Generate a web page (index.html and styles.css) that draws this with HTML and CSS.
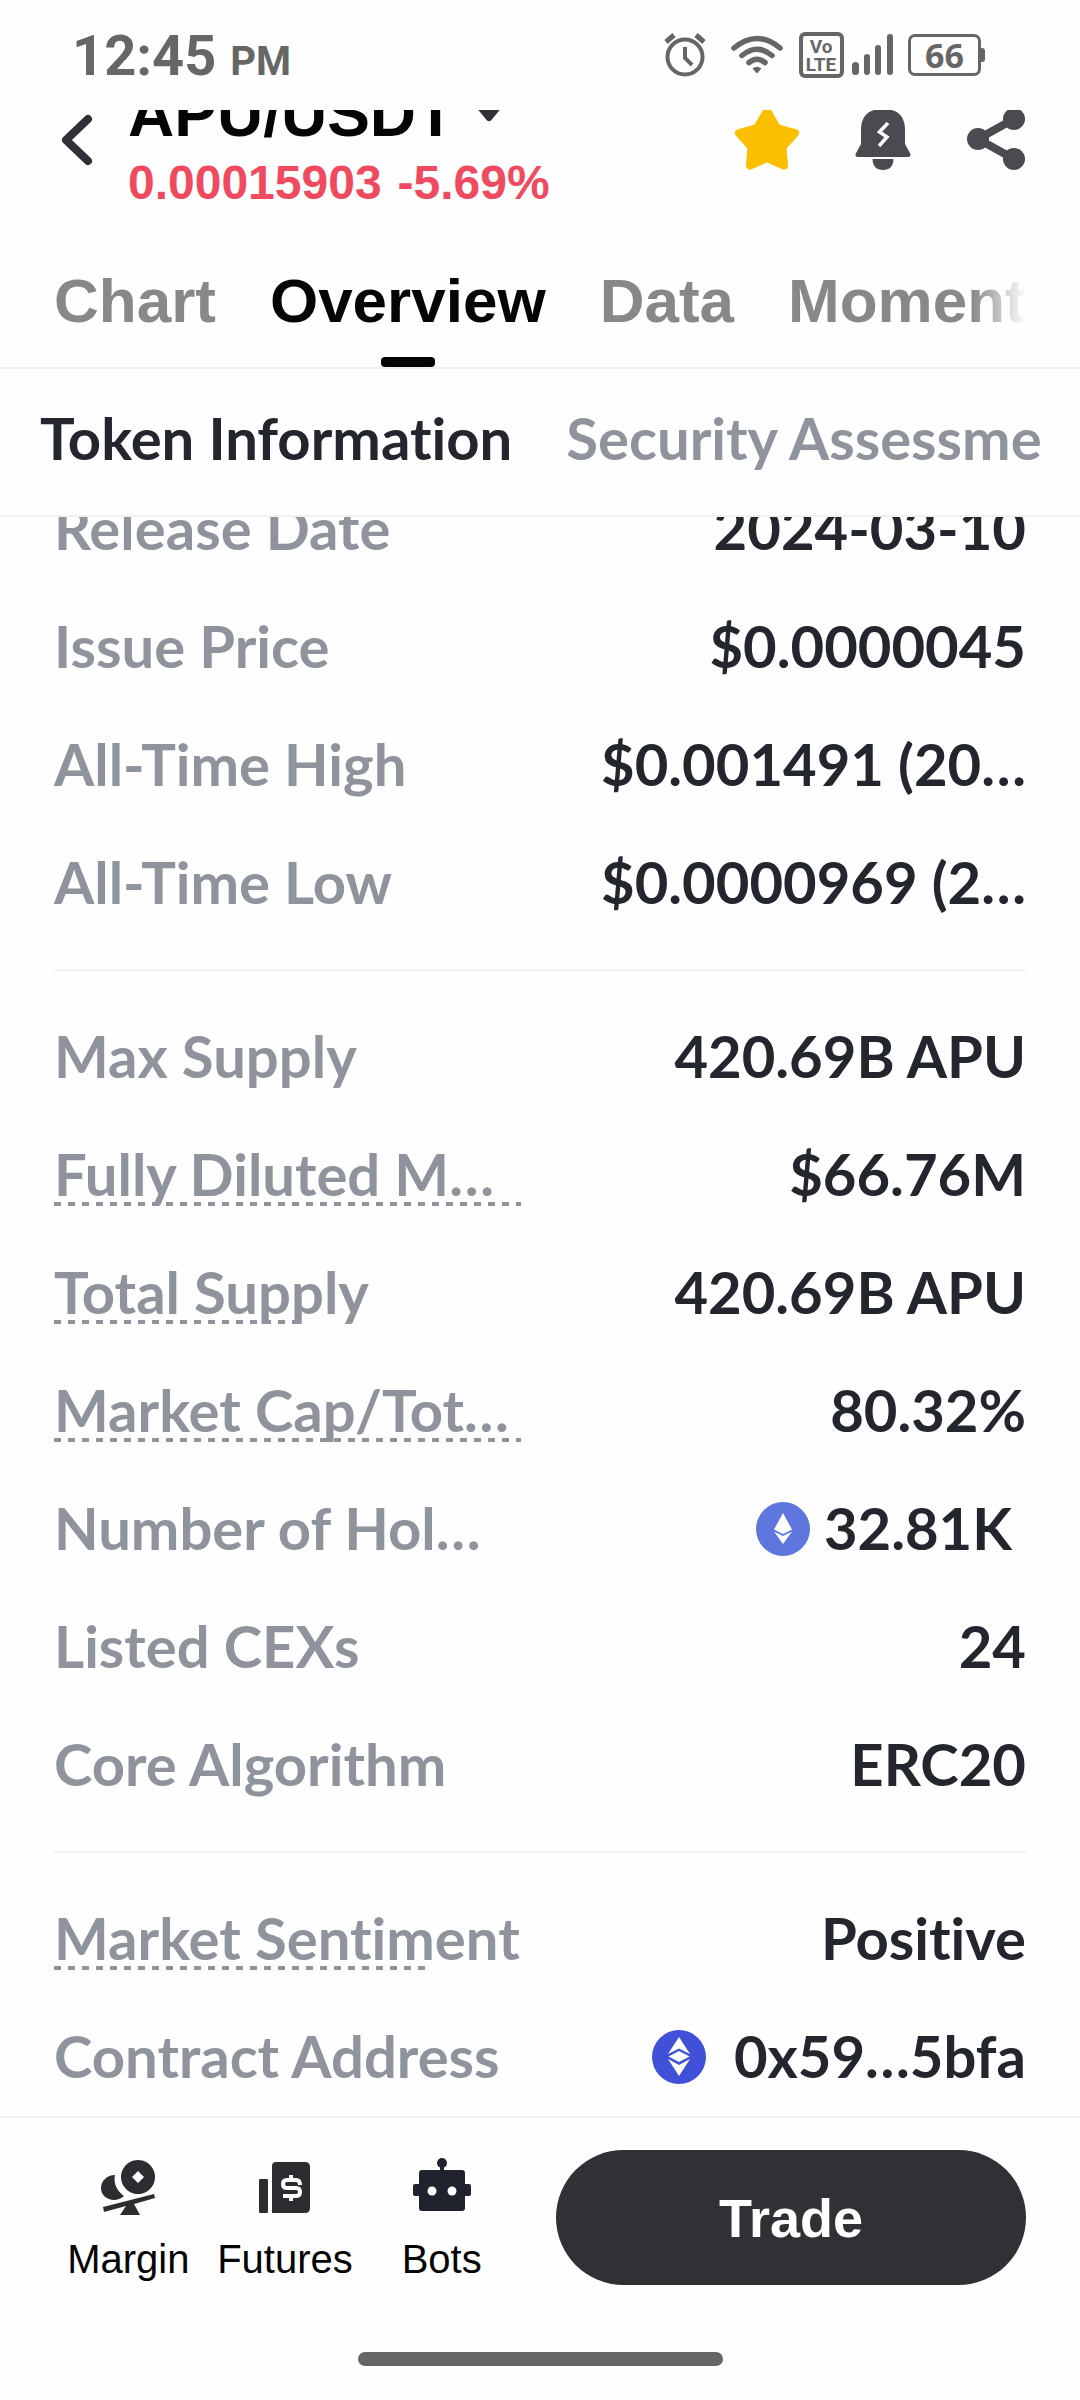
FILE: index.html
```html
<!DOCTYPE html>
<html lang="en">
<head>
<meta charset="utf-8">
<meta name="viewport" content="width=device-width, initial-scale=1">
<title>APU/USDT Overview</title>
<link rel="stylesheet" href="styles.css">
</head>
<body>
<div class="screen">
  <div class="status">
    <div class="clock">12:45 <span class="meridiem">PM</span></div>
    <div class="indicators">
      <svg class="alarm" width="42" height="44" viewBox="0 0 42 44" fill="none" stroke="#666" stroke-width="4">
        <circle cx="21" cy="24" r="17.5"/>
        <path d="M21 14v11l7 7"/>
        <path d="M2 9l8-7M40 9l-8-7" stroke-width="5"/>
      </svg>
      <svg class="wifi" width="52" height="40" viewBox="0 0 52 40" fill="none" stroke="#666" stroke-width="5.5" stroke-linecap="round">
        <path d="M3 13Q26-6 49 13M11 20.500Q26 8 41 20.500M18 27.500Q26 21 34 27.500"/>
        <path d="M21.500 33.500Q26 30 30.500 33.500L26 38.500Z" fill="#666" stroke="none"/>
      </svg>
      <svg class="volte" width="45" height="46" viewBox="0 0 45 46">
        <rect x="2" y="2" width="41" height="42" rx="4" fill="none" stroke="#666" stroke-width="4"/>
        <text x="22" y="21" class="volte-text">Vo</text>
        <text x="22" y="39" class="volte-text">LTE</text>
      </svg>
      <svg class="signal" width="41" height="42" viewBox="0 0 41 42" fill="#666">
        <rect x="0" y="28" width="7" height="13" rx="3.500"/>
        <rect x="12" y="20" width="6" height="21" rx="3"/>
        <rect x="23" y="11" width="6" height="30" rx="3"/>
        <rect x="35" y="0" width="6" height="41" rx="3"/>
      </svg>
      <div class="battery">66</div>
    </div>
  </div>

  <header class="header">
    <button class="icon-button back" aria-label="Back">
      <svg width="34" height="52" viewBox="0 0 34 52" fill="none" stroke="#2f3136" stroke-width="8" stroke-linecap="round" stroke-linejoin="round"><path d="M28 5L6 26L28 47"/></svg>
    </button>
    <div class="pair">
      <button class="pair-name">APU/USDT
        <svg width="28" height="16" viewBox="0 0 28 16" fill="#2f3136"><path d="M0 0H28L16 14.500Q14 16 12 14.500Z"/></svg>
      </button>
      <div class="price"><span>0.00015903</span><span>-5.69%</span></div>
    </div>
    <div class="actions">
      <button class="icon-button" aria-label="Favorite">
        <svg width="64" height="64" viewBox="0 0 64 64" fill="#fcbf00" stroke="#fcbf00" stroke-width="8" stroke-linejoin="round"><path d="M32 5L42 22L60 27L47.500 41L49 59.500L32 52L15 59.500L16.500 41L4 27L22 22Z"/></svg>
      </button>
      <button class="icon-button" aria-label="Price alert">
        <svg width="56" height="64" viewBox="0 0 56 64" fill="#494b50">
          <path d="M6 24Q6 3 28 3T50 24V38L55.500 48Q56 51 53 51H3Q0 51 .500 48L6 38Z"/>
          <path d="M17.500 53H38.500Q38 64 28 64T17.500 53Z"/>
          <path d="M33 17L24.500 26L32 31L24 40" fill="none" stroke="#fefefe" stroke-width="3.500"/>
        </svg>
      </button>
      <button class="icon-button" aria-label="Share">
        <svg width="58" height="64" viewBox="0 0 58 64" fill="#494b50">
          <path d="M47 13L11 33L47 53" fill="none" stroke="#494b50" stroke-width="8"/>
          <circle cx="47" cy="13" r="11"/><circle cx="11" cy="33" r="11"/><circle cx="47" cy="53" r="11"/>
        </svg>
      </button>
    </div>
  </header>

  <nav class="tabs" aria-label="Sections">
    <div class="tabs-track">
      <a class="tab" href="#chart">Chart</a>
      <a class="tab tab-active" href="#overview">Overview</a>
      <a class="tab" href="#data">Data</a>
      <a class="tab" href="#moments">Moments</a>
    </div>
  </nav>

  <nav class="subtabs" aria-label="Overview topics">
    <div class="subtabs-track">
      <a class="subtab subtab-active" href="#token">Token Information</a>
      <a class="subtab" href="#security">Security Assessment</a>
    </div>
  </nav>

  <main class="details">
    <dl class="group group-scrolled">
      <div class="row"><dt>Release Date</dt><dd>2024-03-10</dd></div>
      <div class="row"><dt>Issue Price</dt><dd>$0.0000045</dd></div>
      <div class="row"><dt>All-Time High</dt><dd>$0.001491 (20…</dd></div>
      <div class="row"><dt>All-Time Low</dt><dd>$0.0000969 (2…</dd></div>
    </dl>
    <dl class="group">
      <div class="row"><dt>Max Supply</dt><dd>420.69B APU</dd></div>
      <div class="row"><dt class="hint hint-full">Fully Diluted M…</dt><dd>$66.76M</dd></div>
      <div class="row"><dt class="hint">Total Supply</dt><dd>420.69B APU</dd></div>
      <div class="row"><dt class="hint hint-full">Market Cap/Tot…</dt><dd>80.32%</dd></div>
      <div class="row"><dt>Number of Hol…</dt><dd class="holders">
        <svg width="54" height="56" viewBox="0 0 54 56"><circle cx="27" cy="29" r="27" fill="#5f76df"/><path d="M27 13L36 29.500L27 34L18 29.500Z" fill="#fff"/><path d="M18 31.500L27 36L36 31.500L27 44Z" fill="#fff"/></svg>
        32.81K</dd></div>
      <div class="row"><dt>Listed CEXs</dt><dd>24</dd></div>
      <div class="row"><dt>Core Algorithm</dt><dd>ERC20</dd></div>
    </dl>
    <dl class="group">
      <div class="row"><dt class="hint">Market Sentiment</dt><dd>Positive</dd></div>
      <div class="row"><dt>Contract Address</dt><dd class="contract">
        <svg width="54" height="56" viewBox="0 0 54 56"><circle cx="27" cy="29" r="27" fill="#4150d8"/><path d="M27 9L38 26L27 20.500L16 26Z" fill="#fff"/><path d="M27 23L37.500 28.500L27 34L16.500 28.500Z" fill="#fff"/><path d="M16 31L27 37L38 31L27 48Z" fill="#fff"/></svg>
        0x59…5bfa</dd></div>
    </dl>
  </main>

  <footer class="footer">
    <div class="tools">
      <a class="tool" href="#margin">
        <svg width="56" height="58" viewBox="0 0 56 58" fill="#2b2d31">
          <path fill-rule="evenodd" d="M38 2a17 17 0 1 0 .010 0ZM38 13l6 6-6 6-6-6Z"/>
          <path d="M15 17C7 17 1 23 1 30C1 41 15 46 24 38C17 33 13 25 15 17Z"/>
          <path d="M3 49L54 36L55 40L34 46L40 57H20L26 48L4 54Z"/>
        </svg>
        Margin</a>
      <a class="tool" href="#futures">
        <svg width="52" height="58" viewBox="0 0 52 58" fill="#2b2d31">
          <rect x="0" y="21" width="9" height="34" rx="1"/>
          <path d="M13 8Q13 4 17 4H46Q51 4 51 9V50Q51 55 46 55H13Z"/>
          <path d="M41 27Q41 22 37 22H28Q24 22 24 26T28 30H37Q41 30 41 34T37 38H24M32 17V22M32 38V43" fill="none" stroke="#fff" stroke-width="4"/>
        </svg>
        Futures</a>
      <a class="tool" href="#bots">
        <svg width="58" height="58" viewBox="0 0 58 58" fill="#20232d">
          <circle cx="29" cy="5" r="5"/><rect x="27" y="6" width="4" height="8"/>
          <rect x="6" y="12" width="46" height="41" rx="3"/>
          <rect x="0" y="26" width="58" height="12" rx="2"/>
          <circle cx="19" cy="33" r="4.500" fill="#fff"/><circle cx="39" cy="33" r="4.500" fill="#fff"/>
        </svg>
        Bots</a>
    </div>
    <button class="trade">Trade</button>
    <div class="home-bar"></div>
  </footer>
</div>
</body>
</html>
```
FILE: styles.css
```css
* {
  box-sizing: border-box;
}

body {
  margin: 0;
  background: #fefefe;
  color: #24262d;
  font-family: "Lato", sans-serif;
  font-variant-ligatures: none;
}

a {
  color: inherit;
  text-decoration: none;
}

button {
  margin: 0;
  padding: 0;
  border: 0;
  background: none;
  color: inherit;
  font: inherit;
}

svg {
  display: block;
  flex: none;
}

.screen {
  display: flex;
  flex-direction: column;
  min-height: 100vh;
}

/* Status bar */
.status {
  display: flex;
  align-items: center;
  justify-content: space-between;
  height: 110px;
  padding: 0 95px 0 72px;
  color: #666;
  font-family: "Roboto", sans-serif;
}

.clock {
  padding-top: 8px;
  font-size: 56px;
  font-weight: 700;
  line-height: 52px;
}

.meridiem {
  font-size: 40px;
  font-weight: 700;
}

.indicators {
  display: flex;
  align-items: center;
}

.wifi {
  margin-left: 25px;
}

.volte {
  margin-left: 16px;
}

.volte-text {
  fill: #666;
  font: 700 19px "Roboto", sans-serif;
  text-anchor: middle;
}

.signal {
  margin-left: 8px;
}

.battery {
  position: relative;
  width: 73px;
  height: 42px;
  margin: 0 4px 0 15px;
  border: 3px solid #666;
  border-radius: 7px;
  font-family: "Open Sans", sans-serif;
  font-size: 34px;
  font-weight: 700;
  line-height: 36px;
  text-align: center;
}

.battery::after {
  content: "";
  position: absolute;
  top: 11px;
  right: -7px;
  width: 5px;
  height: 14px;
  border-radius: 0 3px 3px 0;
  background: #666;
}

/* Pair header, its top edge scrolled under the status bar */
.header {
  display: flex;
  align-items: flex-start;
  height: 150px;
  padding: 0 55px 0 60px;
  overflow: hidden;
  font-family: "Liberation Sans", Arial, sans-serif;
}

.back {
  margin-top: 4px;
}

.pair {
  flex: 1;
  margin: -26px 0 0 34px;
}

.pair-name {
  display: flex;
  align-items: center;
  gap: 20px;
  color: #050505;
  font-size: 64px;
  font-weight: 700;
  line-height: 60px;
}

.price {
  display: flex;
  gap: 16px;
  margin-top: 11px;
  color: #ef4a60;
  font-size: 48px;
  font-weight: 700;
  line-height: 56px;
}

.actions {
  display: flex;
  gap: 56px;
  margin-top: -4px;
}

/* Main tabs */
.tabs {
  height: 109px;
  padding: 0 54px;
  border-bottom: 2px solid #f1f1f3;
  font-family: "Liberation Sans", Arial, sans-serif;
}

.tabs-track {
  display: flex;
  gap: 54px;
  height: 107px;
  overflow: hidden;
  -webkit-mask-image: linear-gradient(to left, transparent 0, #000 54px);
  mask-image: linear-gradient(to left, transparent 0, #000 54px);
}

.tab {
  flex: none;
  color: #868889;
  font-size: 62px;
  font-weight: 700;
  line-height: 82px;
}

.tab-active {
  display: flex;
  flex-direction: column;
  align-items: center;
  justify-content: space-between;
  color: #050505;
}

.tab-active::after {
  content: "";
  width: 54px;
  height: 10px;
  border-radius: 4px;
  background: #050505;
}

/* Topic tabs */
.subtabs {
  padding: 0 40px;
  border-bottom: 2px solid #f1f1f3;
}

.subtabs-track {
  display: flex;
  gap: 54px;
  padding-bottom: 8px;
  overflow: hidden;
}

.subtab {
  flex: none;
  color: #8f939b;
  font-size: 58px;
  font-weight: 700;
  line-height: 138px;
}

.subtab-active {
  color: #24262d;
}

/* Token details */
.details {
  flex: 1;
  padding: 0 54px;
  overflow: hidden;
}

.group {
  margin: 0;
}

.group-scrolled {
  margin-top: -48px;
}

.group + .group {
  margin-top: 28px;
  padding-top: 26px;
  border-top: 2px solid #f1f1f3;
}

.row {
  display: flex;
  align-items: center;
  justify-content: space-between;
  height: 118px;
  font-size: 58px;
  font-weight: 700;
  line-height: 70px;
  white-space: nowrap;
}

.row dt {
  color: #8f939b;
}

.row dd {
  display: flex;
  align-items: center;
  margin: 0;
}

.hint {
  position: relative;
}

.hint-full {
  width: 48%;
}

.hint::after {
  content: "";
  position: absolute;
  left: 0;
  bottom: 3px;
  width: 80%;
  height: 4px;
  background: repeating-linear-gradient(to right, #8f939b 0 7px, transparent 7px 14px);
}

.hint-full::after {
  width: 100%;
}

.holders {
  gap: 14px;
  padding-right: 14px;
}

.contract {
  gap: 28px;
}

/* Bottom bar */
.footer {
  display: grid;
  grid-template-columns: 1fr 1fr;
  column-gap: 32px;
  padding: 32px 54px 34px;
  border-top: 2px solid #f1f1f3;
  font-family: "Liberation Sans", Arial, sans-serif;
}

.tools {
  display: grid;
  grid-template-columns: 1fr 1fr 1fr;
  margin-left: -4px;
  padding-right: 4px;
}

.tool {
  display: flex;
  flex-direction: column;
  align-items: center;
  gap: 20px;
  padding-top: 8px;
  color: #050505;
  font-size: 40px;
  line-height: 46px;
}

.trade {
  height: 135px;
  border-radius: 68px;
  background: #303135;
  color: #fff;
  font-size: 54px;
  font-weight: 700;
}

.home-bar {
  grid-column: 1 / -1;
  justify-self: center;
  width: 365px;
  height: 14px;
  margin-top: 67px;
  border-radius: 7px;
  background: #666;
}
```
